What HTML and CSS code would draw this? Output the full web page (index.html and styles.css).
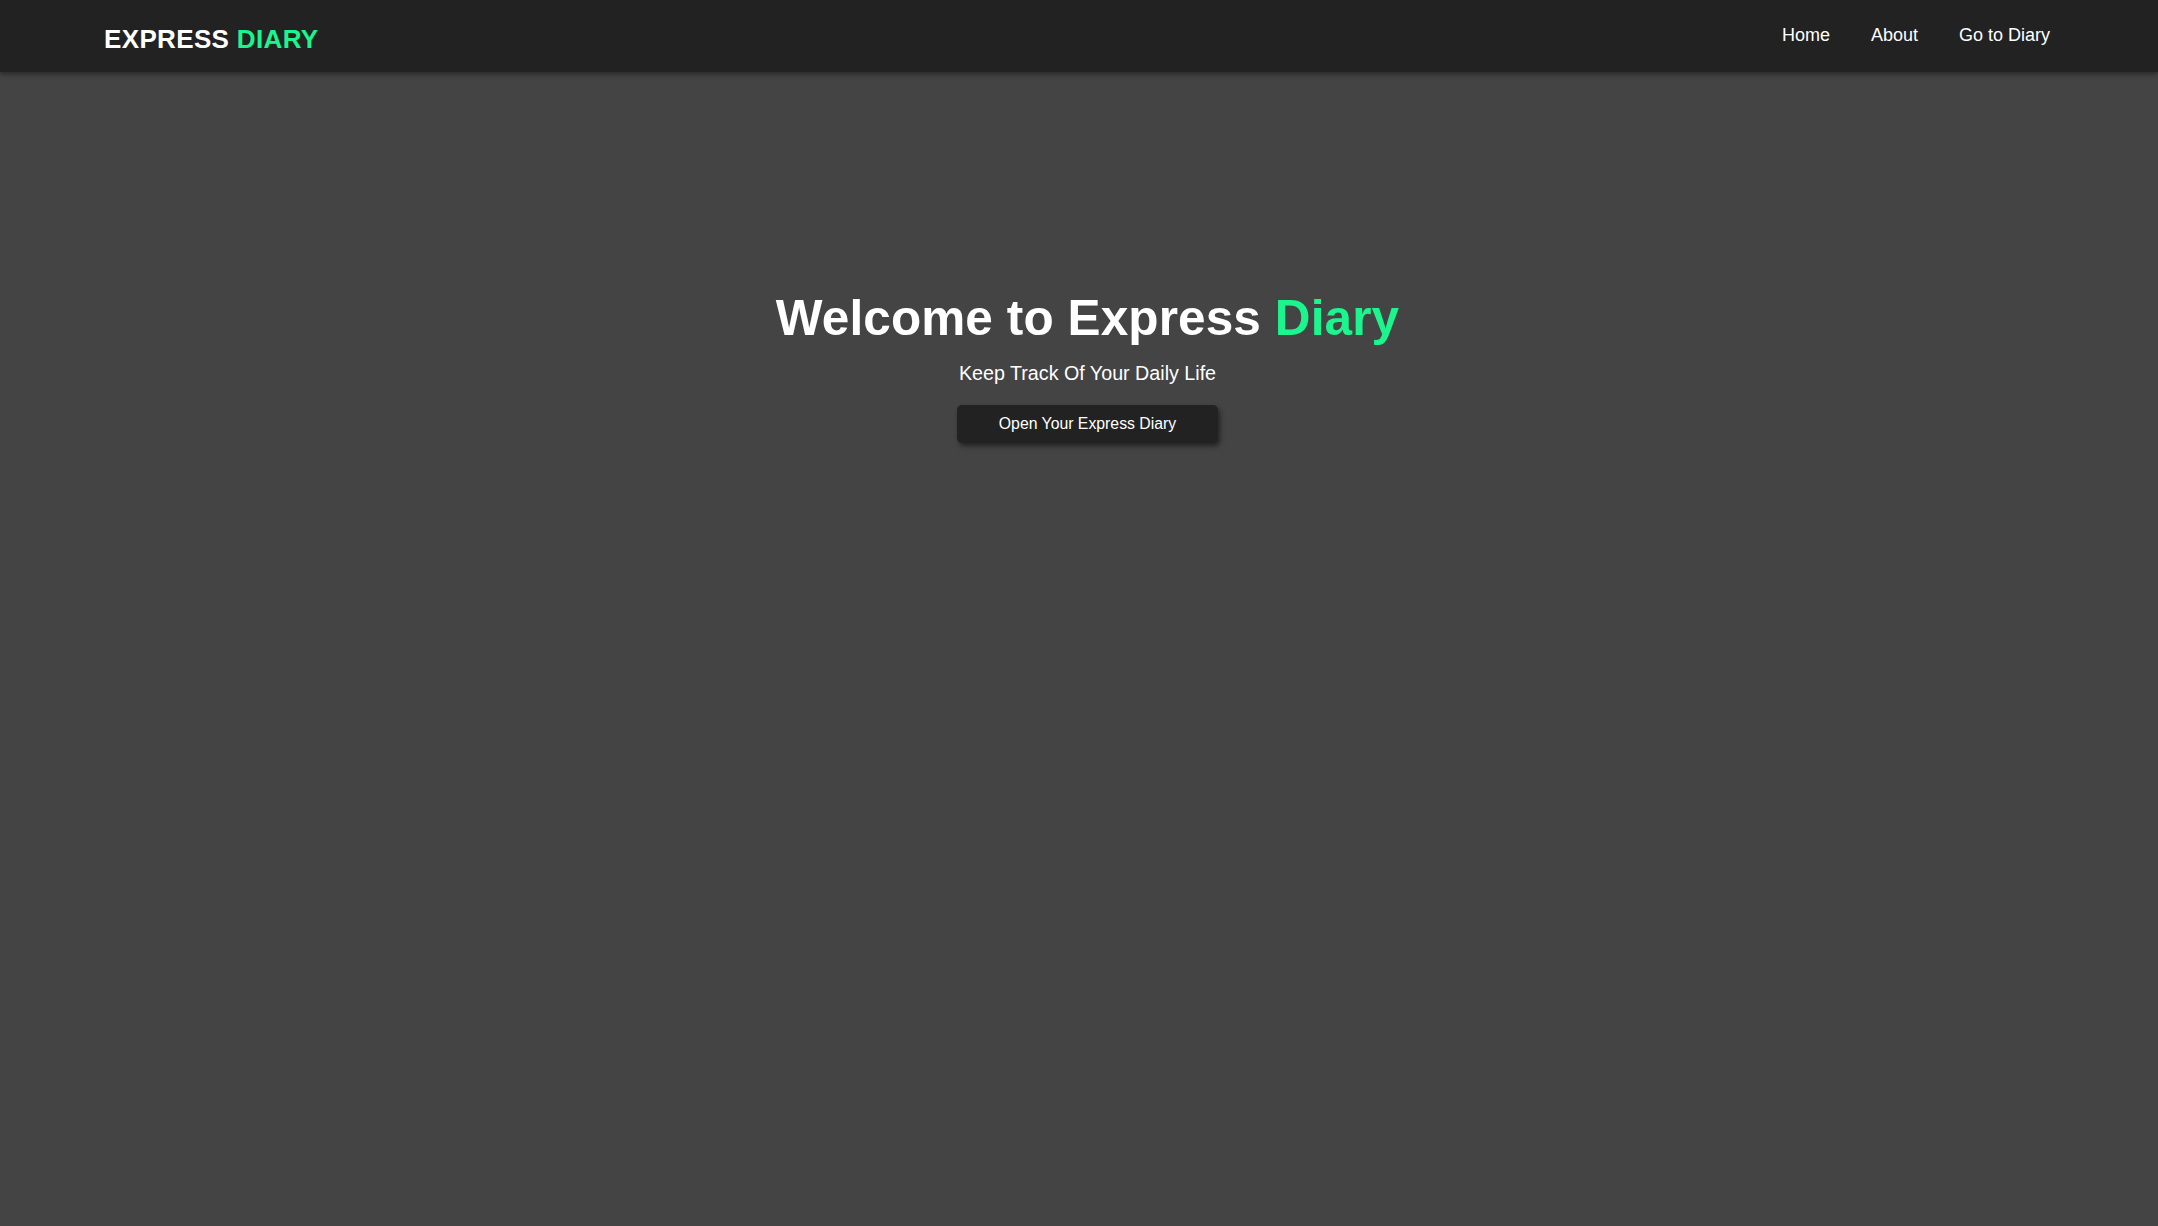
FILE: index.html
```html
<!DOCTYPE html>
<html lang="en">
<head>
<meta charset="utf-8">
<title>Express Diary</title>
<link rel="stylesheet" href="styles.css">
</head>
<body>
<header class="navbar">
  <a class="brand" href="#">EXPRESS <span class="accent">DIARY</span></a>
  <nav class="nav-links">
    <a href="#">Home</a>
    <a href="#">About</a>
    <a href="#">Go to Diary</a>
  </nav>
</header>
<main class="hero">
  <h1 class="hero-title">Welcome to Express <span class="accent">Diary</span></h1>
  <p class="hero-subtitle">Keep Track Of Your Daily Life</p>
  <a class="hero-button" href="#">Open Your Express Diary</a>
</main>
</body>
</html>
```
FILE: styles.css
```css
html, body {
  margin: 0;
  padding: 0;
  height: 100%;
}
body {
  background: #444444;
  color: #ffffff;
  font-family: "Liberation Sans", Arial, sans-serif;
}
a {
  color: #ffffff;
  text-decoration: none;
}
.accent {
  color: #1cf58e;
}
.navbar {
  height: 72px;
  box-sizing: border-box;
  background: #222222;
  box-shadow: 0 2px 5px rgba(0, 0, 0, 0.45);
  display: flex;
  justify-content: space-between;
  align-items: flex-start;
  padding: 24px 108px 0 104px;
  position: relative;
}
.brand {
  font-size: 26px;
  font-weight: bold;
  line-height: 30px;
  letter-spacing: 0.35px;
}
.nav-links {
  display: flex;
  gap: 41px;
  margin-top: 1px;
}
.nav-links a {
  font-size: 18px;
  line-height: 21px;
}
.hero {
  display: flex;
  flex-direction: column;
  align-items: center;
  padding: 217px 0 0 17px;
}
.hero-title {
  margin: 0;
  font-size: 49.5px;
  line-height: 57px;
  font-weight: bold;
  letter-spacing: 0.1px;
}
.hero-subtitle {
  margin: 16px 0 0;
  font-size: 19.7px;
  line-height: 23px;
}
.hero-button {
  margin-top: 20px;
  width: 261px;
  height: 38px;
  box-sizing: border-box;
  display: flex;
  align-items: center;
  justify-content: center;
  background: #222222;
  border-radius: 5px;
  font-size: 15.8px;
  box-shadow: 2px 3px 5px rgba(0, 0, 0, 0.5);
}
```
